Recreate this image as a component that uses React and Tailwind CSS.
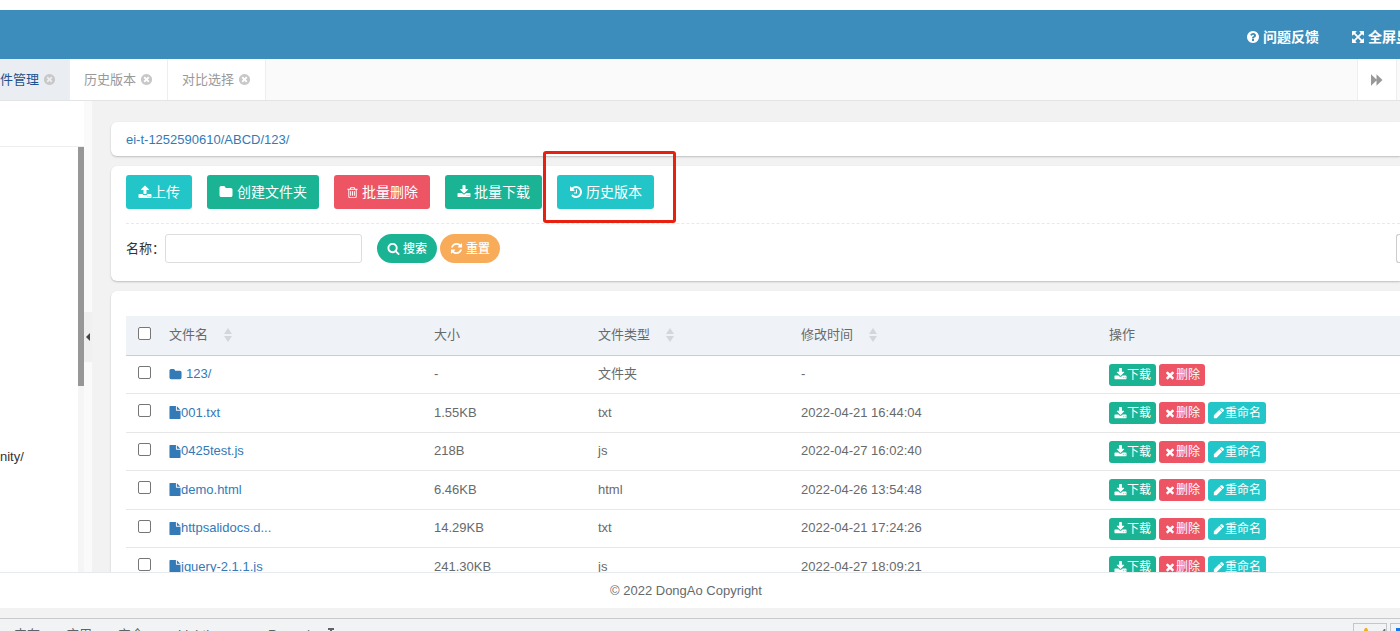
const OUTER =
  'm0 0zM1664 896q0 209-103 385.5t-279.5 279.5-385.5 103-385.5-103-279.5-279.5-103-385.5 103-385.5 279.5-279.5 385.5-103 385.5 103 279.5 279.5 103 385.5z';

const PATHS = {
  upload:
    'M1344 1472q0-26-19-45t-45-19-45 19-19 45 19 45 45 19 45-19 19-45zm256 0q0-26-19-45t-45-19-45 19-19 45 19 45 45 19 45-19 19-45zm128-224v320q0 40-28 68t-68 28h-1472q-40 0-68-28t-28-68v-320q0-40 28-68t68-28h427q21 56 70.500 92t110.500 36h256q61 0 110.500-36t70.500-92h427q40 0 68 28t28 68zm-325-648q-17 40-59 40h-256v448q0 26-19 45t-45 19h-256q-26 0-45-19t-19-45v-448h-256q-42 0-59-40-17-39 14-69l448-448q18-19 45-19t45 19l448 448q31 30 14 69z',
  download:
    'M1344 1344q0-26-19-45t-45-19-45 19-19 45 19 45 45 19 45-19 19-45zm256 0q0-26-19-45t-45-19-45 19-19 45 19 45 45 19 45-19 19-45zm128-224v320q0 40-28 68t-68 28h-1472q-40 0-68-28t-28-68v-320q0-40 28-68t68-28h465l135 136q58 56 136 56t136-56l136-136h464q40 0 68 28t28 68zm-325-569q17 41-14 70l-448 448q-18 19-45 19t-45-19l-448-448q-31-29-14-70 17-39 59-39h256v-448q0-26 19-45t45-19h256q26 0 45 19t19 45v448h256q42 0 59 39z',
  folder:
    'M1728 608v704q0 92-66 158t-158 66h-1216q-92 0-158-66t-66-158v-960q0-92 66-158t158-66h320q92 0 158 66t66 158v32h672q92 0 158 66t66 158z',
  trash:
    'M704 736v576q0 14-9 23t-23 9h-64q-14 0-23-9t-9-23v-576q0-14 9-23t23-9h64q14 0 23 9t9 23zm256 0v576q0 14-9 23t-23 9h-64q-14 0-23-9t-9-23v-576q0-14 9-23t23-9h64q14 0 23 9t9 23zm256 0v576q0 14-9 23t-23 9h-64q-14 0-23-9t-9-23v-576q0-14 9-23t23-9h64q14 0 23 9t9 23zm128 724v-948h-896v948q0 22 7 40.500t14.500 27 10.500 8.500h832q3 0 10.500-8.500t14.500-27 7-40.500zm-672-1076h448l-48-117q-7-9-17-11h-317q-10 2-17 11zm928 32v64q0 14-9 23t-23 9h-96v948q0 83-47 143.500t-113 60.500h-832q-66 0-113-58.500t-47-141.500v-952h-96q-14 0-23-9t-9-23v-64q0-14 9-23t23-9h309l70-167q15-37 54-63t79-26h320q40 0 79 26t54 63l70 167h309q14 0 23 9t9 23z',
  history:
    'M1664 896q0 156-61 298t-164 245-245 164-298 61q-172 0-327-72.500t-264-204.500q-7-10-6.500-22.500t8.500-20.500l137-138q10-9 25-9 16 2 23 12 73 95 179 147t225 52q104 0 198.500-40.500t163.500-109.500 109.500-163.500 40.500-198.500-40.500-198.500-109.500-163.500-163.500-109.500-198.500-40.500q-98 0-188 35.500t-160 101.500l137 138q31 30 14 69-17 40-59 40h-448q-26 0-45-19t-19-45v-448q0-42 40-59 39-17 69 14l130 129q107-101 244.500-156.500t284.500-55.500q156 0 298 61t245 164 164 245 61 298zm-640-288v448q0 14-9 23t-23 9h-320q-14 0-23-9t-9-23v-64q0-14 9-23t23-9h224v-352q0-14 9-23t23-9h64q14 0 23 9t9 23z',
  search:
    'M1216 832q0-185-131.500-316.500t-316.500-131.500-316.500 131.500-131.500 316.500 131.500 316.500 316.500 131.500 316.500-131.500 131.500-316.500zm512 832q0 52-38 90t-90 38q-54 0-90-38l-343-342q-179 124-399 124-143 0-273.500-55.500t-225-150-150-225-55.500-273.500 55.500-273.500 150-225 225-150 273.500-55.500 273.500 55.500 225 150 150 225 55.500 273.500q0 220-124 399l343 343q37 37 37 90z',
  refresh:
    'M1639 1056q0 5-1 7-64 268-268 434.500t-478 166.500q-146 0-282.500-55t-243.500-157l-129 129q-19 19-45 19t-45-19-19-45v-448q0-26 19-45t45-19h448q26 0 45 19t19 45-19 45l-137 137q71 66 161 102t187 36q134 0 250-65t186-179q11-17 53-117 8-23 30-23h192q13 0 22.500 9.500t9.500 22.500zm25-800v448q0 26-19 45t-45 19h-448q-26 0-45-19t-19-45 19-45l138-138q-148-137-349-137-134 0-250 65t-186 179q-11 17-53 117-8 23-30 23h-199q-13 0-22.500-9.500t-9.500-22.500v-7q65-268 270-434.500t480-166.500q146 0 284 55.500t245 156.500l130-129q19-19 45-19t45 19 19 45z',
  times:
    'M1490 1322q0 40-28 68l-136 136q-28 28-68 28t-68-28l-294-294-294 294q-28 28-68 28t-68-28l-136-136q-28-28-28-68t28-68l294-294-294-294q-28-28-28-68t28-68l136-136q28-28 68-28t68 28l294 294 294-294q28-28 68-28t68 28l136 136q28 28 28 68t-28 68l-294 294 294 294q28 28 28 68z',
  pencil:
    'M1643 512q0 53-37 90l-166 166-416-416 166-165q36-38 90-38 53 0 91 38l235 234q37 39 37 91zM960 416l416 416-832 832h-416v-416z',
  file:
    'M1152 512v-472q22 14 36 28l408 408q14 14 28 36h-472zm-128 32q0 40 28 68t68 28h544v1056q0 40-28 68t-68 28h-1344q-40 0-68-28t-28-68v-1600q0-40 28-68t68-28h800v544z',
  question:
    'M1024 1376v-192q0-14-9-23t-23-9h-192q-14 0-23 9t-9 23v192q0 14 9 23t23 9h192q14 0 23-9t9-23zm256-672q0-88-55.500-163t-138.500-116-170-41q-243 0-371 213-15 24 8 42l132 100q7 6 19 6 16 0 25-12 53-68 86-92 34-24 86-24 48 0 85.500 26t37.500 59q0 38-20 61t-68 45q-63 28-115.500 86.500t-52.500 125.500v36q0 14 9 23t23 9h192q14 0 23-9t9-23q0-19 21.500-49.500t54.500-49.500q32-18 49-28.500t46-35 44.500-48 28-60.500 12.500-81z' + OUTER,
  close:
    'M1277 1122q0-26-19-45l-181-181 181-181q19-19 19-45 0-27-19-46l-90-90q-19-19-46-19-26 0-45 19l-181 181-181-181q-19-19-45-19-27 0-46 19l-90 90q-19 19-19 46 0 26 19 45l181 181-181 181q-19 19-19 45 0 27 19 46l90 90q19 19 46 19 26 0 45-19l181-181 181 181q19 19 45 19 27 0 46-19l90-90q19-19 19-46z' + OUTER,
  expand:
    'M1411 541l-355 355 355 355 144-144q29-31 70-14 39 17 39 59v448q0 26-19 45t-45 19h-448q-42 0-59-40-17-39 14-69l144-144-355-355-355 355 144 144q31 30 14 69-17 40-59 40h-448q-26 0-45-19t-19-45v-448q0-42 40-59 39-17 69 14l144 144 355-355-355-355-144 144q-19 19-45 19-12 0-24-5-40-17-40-59v-448q0-26 19-45t45-19h448q42 0 59 40 17 39-14 69l-144 144 355 355 355-355-144-144q-31-30-14-69 17-40 59-40h448q26 0 45 19t19 45v448q0 42-39 59-13 5-25 5-26 0-45-19z',
  forward: 'M128 160L832 832V160L1600 896L832 1632V960L128 1632z',
};

function Icon({ name, className = 'size-[14px]' }) {
  return (
    <svg viewBox="0 0 1792 1792" fill="currentColor" fillRule="evenodd" aria-hidden="true" className={`shrink-0 ${className}`}>
      <path d={PATHS[name]} />
    </svg>
  );
}

function Tab({ label, active }) {
  return (
    <div
      className={`flex h-full shrink-0 items-center border-r border-[#eeeeee] ${
        active ? 'bg-[#eaedf1] pr-[13px] text-[#23508e]' : 'bg-white px-[14px] text-[#999999]'
      }`}
    >
      <a href="#tab" className="whitespace-nowrap">{label}</a>
      <button type="button" aria-label={`关闭${label}`} className="ml-1 text-[#c8c8c8]">
        <Icon name="close" className="size-[13px]" />
      </button>
    </div>
  );
}

function ToolButton({ icon, color, size = 'size-[14px]', gap = 'gap-1', children }) {
  return (
    <button
      type="button"
      className={`flex h-[34px] shrink-0 items-center whitespace-nowrap rounded-[3px] px-3 text-[14px] text-white ${gap} ${color}`}
    >
      <Icon name={icon} className={size} />
      {children}
    </button>
  );
}

function PillButton({ icon, color, children }) {
  return (
    <button
      type="button"
      className={`flex h-[29px] shrink-0 items-center gap-[3px] whitespace-nowrap rounded-full px-[10px] text-[12px] font-medium text-white ${color}`}
    >
      <Icon name={icon} className="size-[13px]" />
      {children}
    </button>
  );
}

function RowButton({ icon, color, size = 'size-[12px]', children }) {
  return (
    <button
      type="button"
      className={`flex h-[22px] shrink-0 items-center whitespace-nowrap rounded-[3px] px-[5px] text-[12px] text-white ${color}`}
    >
      <Icon name={icon} className={size} />
      {children}
    </button>
  );
}

function SortArrows() {
  return (
    <svg viewBox="0 0 8 16" className="ml-4 h-4 w-2" fill="#d3d6da" aria-hidden="true">
      <path d="M4 1L8 7H0zM0 9h8L4 15z" />
    </svg>
  );
}

function Check({ label }) {
  return (
    <input
      type="checkbox"
      aria-label={label}
      className="block size-[13px] appearance-none rounded-[2px] border border-[#767676] bg-white"
    />
  );
}

const FILES = [
  { name: '123/', size: '-', type: '文件夹', time: '-', folder: true },
  { name: '001.txt', size: '1.55KB', type: 'txt', time: '2022-04-21 16:44:04' },
  { name: '0425test.js', size: '218B', type: 'js', time: '2022-04-27 16:02:40' },
  { name: 'demo.html', size: '6.46KB', type: 'html', time: '2022-04-26 13:54:48' },
  { name: 'httpsalidocs.d...', size: '14.29KB', type: 'txt', time: '2022-04-21 17:24:26' },
  { name: 'jquery-2.1.1.js', size: '241.30KB', type: 'js', time: '2022-04-27 18:09:21' },
];

function FileTable() {
  return (
    <table className="w-full table-fixed border-collapse text-left">
      <colgroup>
        <col className="w-[35px]" />
        <col className="w-[265px]" />
        <col className="w-[164px]" />
        <col className="w-[203px]" />
        <col className="w-[308px]" />
        <col />
      </colgroup>
      <thead>
        <tr className="h-[39px] border-b border-[#c9cdd1] bg-[#eff3f8]">
          <th className="pb-1 pl-3"><Check label="全选" /></th>
          <th className="pl-2 font-normal"><div className="flex items-center">文件名<SortArrows /></div></th>
          <th className="pl-2 font-normal">大小</th>
          <th className="pl-2 font-normal"><div className="flex items-center">文件类型<SortArrows /></div></th>
          <th className="pl-2 font-normal"><div className="flex items-center">修改时间<SortArrows /></div></th>
          <th className="pl-2 font-normal">操作</th>
        </tr>
      </thead>
      <tbody>
        {FILES.map((f) => (
          <tr key={f.name} className="h-[38px] border-b border-[#e7e7e7] even:h-[39px]">
            <td className="pb-1 pl-3"><Check label={f.name} /></td>
            <td className="pl-2">
              <a href="#file" className={`flex items-center text-[#337ab7] ${f.folder ? 'gap-1' : ''}`}>
                {f.folder ? (
                  <Icon name="folder" className="size-[13px]" />
                ) : (
                  <svg viewBox="64 0 1664 1792" fill="currentColor" aria-hidden="true" className="h-[13px] w-3 shrink-0">
                    <path d={PATHS.file} />
                  </svg>
                )}
                {f.name}
              </a>
            </td>
            <td className="pl-2">{f.size}</td>
            <td className="pl-2">{f.type}</td>
            <td className="pl-2">{f.time}</td>
            <td className="pl-2 pt-px">
              <div className="flex gap-[3px]">
                <RowButton icon="download" size="size-[13px]" color="bg-[#1ab394]">下载</RowButton>
                <RowButton icon="times" color="bg-[#ed5565]">删除</RowButton>
                {!f.folder && <RowButton icon="pencil" color="bg-[#23c6c8]">重命名</RowButton>}
              </div>
            </td>
          </tr>
        ))}
      </tbody>
    </table>
  );
}

export default function App() {
  return (
    <div className="flex h-screen flex-col overflow-hidden bg-white pt-[10px] font-['Liberation_Sans','Noto_Sans_CJK_SC',sans-serif] text-[13px] leading-5 text-[#676a6c]">
      <header className="flex h-[49px] shrink-0 items-center justify-end overflow-hidden bg-[#3c8dbc] pt-1 text-[14px] font-bold text-white">
        <a href="#feedback" className="mr-8 flex shrink-0 items-center gap-[3px]">
          <Icon name="question" />问题反馈
        </a>
        <a href="#fullscreen" className="-mr-6 flex shrink-0 items-center gap-[3px] whitespace-nowrap">
          <Icon name="expand" />全屏显示
        </a>
      </header>

      <nav className="flex h-[42px] shrink-0 items-center overflow-hidden border-b border-[#e4e4e4] bg-[#fafafa]">
        <Tab label="件管理" active />
        <Tab label="历史版本" />
        <Tab label="对比选择" />
        <button
          type="button"
          aria-label="向右滚动标签"
          className="ml-auto mr-[3px] flex h-full w-10 items-center justify-center border-x border-[#eeeeee] bg-white text-[#999999]"
        >
          <Icon name="forward" />
        </button>
      </nav>

      <main className="flex min-h-0 flex-1 overflow-hidden bg-[#f2f2f2]">
        <aside className="flex w-[84px] shrink-0 flex-col bg-white">
          <div className="h-[46px] shrink-0 border-b border-[#eeeeee]" />
          <div className="flex min-h-0 flex-1 justify-between">
            <div className="pt-[300px] text-[#333333]">nity/</div>
            <div className="w-[6px] bg-[#f5f5f5]">
              <div className="h-[239px] bg-[#979797]" />
            </div>
          </div>
        </aside>
        <div className="flex w-2 shrink-0 flex-col justify-center bg-[#fafafa]">
          <button type="button" aria-label="收起侧栏" className="flex h-[50px] items-center justify-center bg-[#f0f0f0] text-[#444444]">
            <svg viewBox="0 0 4 8" className="h-2 w-1" fill="currentColor" aria-hidden="true"><path d="M4 0v8L0 4z" /></svg>
          </button>
        </div>

        <div className="ml-[19px] flex min-w-0 flex-1 flex-col gap-[10px] pt-[21px]">
          <section className="shrink-0 rounded-l-[6px] bg-white pb-[6px] pl-[15px] pt-2 shadow-[0_1px_2px_rgba(0,0,0,0.22)]">
            <a href="#path" className="text-[#337ab7]">ei-t-1252590610/ABCD/123/</a>
          </section>

          <section className="shrink-0 rounded-l-[6px] bg-white pb-[18px] pl-[15px] pt-[9px] shadow-[0_1px_2px_rgba(0,0,0,0.22)]">
            <div className="flex gap-[15px] border-b border-dashed border-[#e7eaec] pb-[14px]">
              <ToolButton icon="upload" gap="gap-0" color="bg-[#23c6c8]">上传</ToolButton>
              <ToolButton icon="folder" color="bg-[#1ab394]">创建文件夹</ToolButton>
              <ToolButton icon="trash" size="size-[13px]" gap="gap-[3px]" color="bg-[#ed5565]">批量删除</ToolButton>
              <ToolButton icon="download" gap="gap-[3px]" color="bg-[#1ab394]">批量下载</ToolButton>
              <div className="relative">
                <ToolButton icon="history" gap="gap-[3px]" color="bg-[#23c6c8]">历史版本</ToolButton>
                <div className="pointer-events-none absolute -bottom-[14px] -left-[14px] -right-[22px] -top-[24px] rounded-[3px] border-[3px] border-[#e8200f]" />
              </div>
            </div>
            <form className="flex items-center pt-[10px]" onSubmit={(e) => e.preventDefault()}>
              <label htmlFor="file-name" className="shrink-0 text-[#333333]">名称：</label>
              <input id="file-name" type="text" className="h-[29px] w-[197px] rounded-[3px] border border-[#dddddd] bg-white px-2 outline-none" />
              <div className="ml-[15px] flex gap-[3px]">
                <PillButton icon="search" color="bg-[#1ab394]">搜索</PillButton>
                <PillButton icon="refresh" color="bg-[#f8ac59]">重置</PillButton>
              </div>
              <button type="button" aria-label="显示搜索" className="ml-auto h-[29px] w-1 rounded-l-[3px] border border-r-0 border-[#cccccc] bg-white" />
            </form>
          </section>

          <section className="shrink-0 rounded-l-[6px] bg-white pl-[15px] pt-[25px] shadow-[0_1px_2px_rgba(0,0,0,0.22)]">
            <FileTable />
          </section>
        </div>
      </main>

      <footer className="h-[36px] shrink-0 border-t border-[#e7eaec] bg-white pr-[28px] pt-2 text-center">
        © 2022 DongAo Copyright
      </footer>
      <div className="h-[10px] shrink-0 bg-[#f2f2f2]" />
      <div className="flex h-[13px] shrink-0 items-start justify-between overflow-hidden border-t border-[#c8cacc] bg-[#f1f3f4] text-[#5f6368]">
        <div className="flex shrink-0 whitespace-nowrap pl-[14px] pt-[6px]">
          <span className="w-[52px]">内存</span>
          <span className="w-[52px]">应用</span>
          <span className="w-[60px]">安全</span>
          <span className="w-[90px]">Lighthouse</span>
          <span className="w-[59px]">Recorder</span>
          <svg viewBox="0 0 8 12" className="mt-[3px] h-3 w-2" fill="none" stroke="currentColor" strokeWidth="2" aria-hidden="true">
            <path d="M1 1h6M4 1v5L1 11h6L4 6" />
          </svg>
        </div>
        <div className="flex shrink-0 gap-[3px] pt-1 text-[12px]">
          <button type="button" className="flex h-5 w-[34px] items-start gap-2 border border-[#c4c7ca] pl-[6px]">
            <svg viewBox="0 0 12 12" className="mt-1 size-3 shrink-0" aria-hidden="true"><path d="M5 0h2l5 12H0z" fill="#f2ab26" /></svg>
            <span>4</span>
          </button>
          <button type="button" aria-label="消息" className="flex h-5 w-[10px] items-start overflow-hidden border border-r-0 border-[#c4c7ca] pl-1">
            <svg viewBox="0 0 12 12" className="mt-1 size-3 shrink-0" aria-hidden="true"><path d="M1 0h10v8H5L1 12z" fill="#1a73e8" /></svg>
          </button>
        </div>
      </div>
    </div>
  );
}
